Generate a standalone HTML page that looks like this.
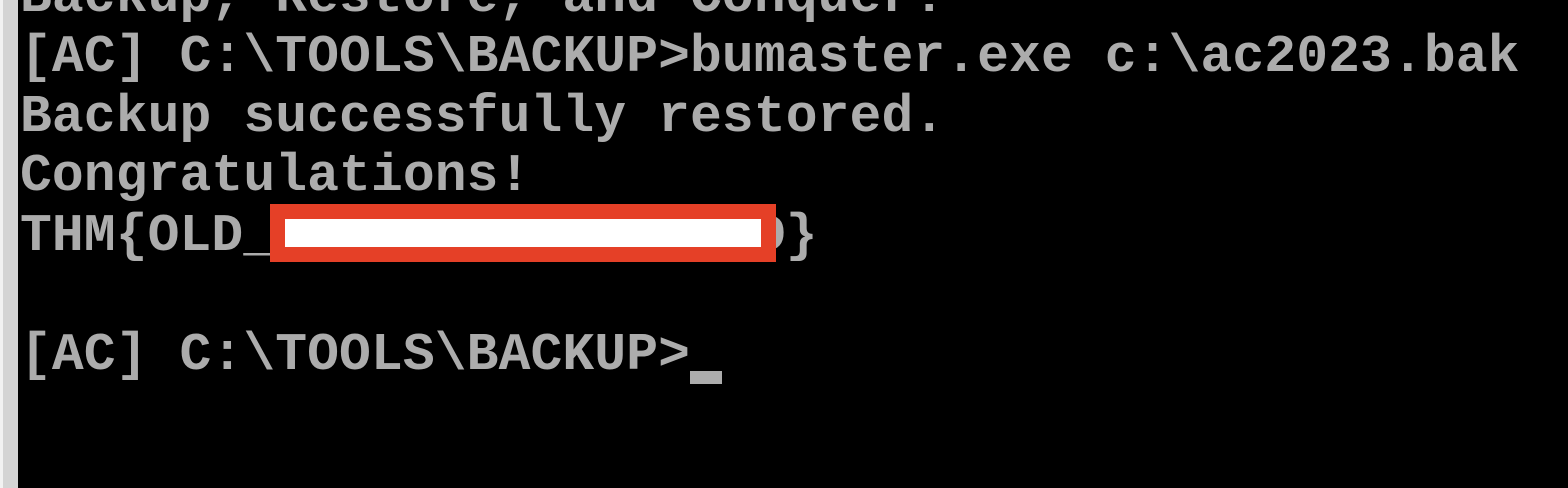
<!DOCTYPE html>
<html><head><style>
html,body{margin:0;padding:0;width:1568px;height:488px;overflow:hidden;background:#000;}
.strip{position:absolute;left:0;top:0;width:18px;height:488px;background:#d4d4d4;}
.strip:before{content:"";position:absolute;left:0;top:0;width:3px;height:488px;background:#f2f2f2;}
pre{position:absolute;left:20px;top:-31.6px;margin:0;font-family:"Liberation Mono",monospace;font-weight:bold;font-size:53px;line-height:59.6px;color:#acacac;letter-spacing:0.1px;}
.box{position:absolute;left:270px;top:204px;width:476px;height:28px;border:15px solid #e54027;background:#fff;}
.cur{position:absolute;left:690px;top:371px;width:32px;height:13px;background:#acacac;}
</style></head><body>
<div class="strip"></div>
<pre>Backup, Restore, and Conquer!
[AC] C:\TOOLS\BACKUP&gt;bumaster.exe c:\ac2023.bak
Backup successfully restored.
Congratulations!
THM{OLD_ABCDEF_GHIJ_KLMD}

[AC] C:\TOOLS\BACKUP&gt;</pre>
<div class="box"></div>
<div class="cur"></div>
</body></html>
